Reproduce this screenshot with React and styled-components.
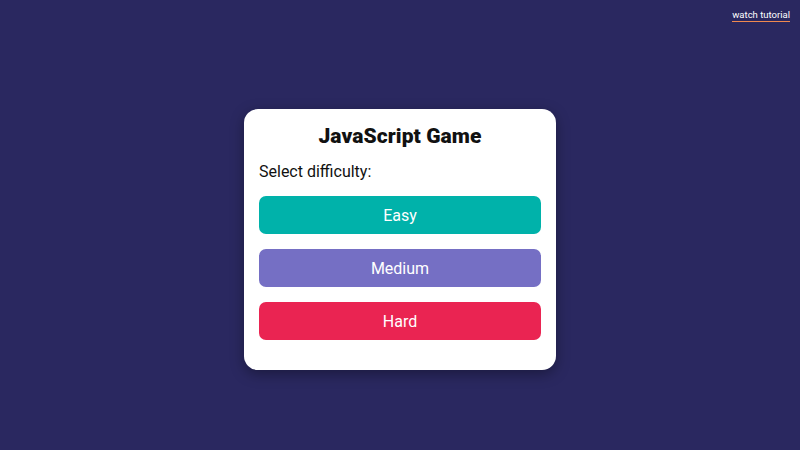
import React from 'react';
import styled, { createGlobalStyle } from 'styled-components';

const GlobalStyle = createGlobalStyle`
    * {
        box-sizing: border-box;
    }
    body {
        margin: 0;
        background: #2a2860;
        font-family: 'Roboto', 'Noto Sans', sans-serif;
    }
`;

const Page = styled.div`
    position: relative;
    min-height: 100vh;
    display: flex;
    align-items: center;
    justify-content: center;
    padding-top: 29px;
`;

const TutorialLink = styled.a`
    position: absolute;
    top: 9px;
    right: 10px;
    color: #ffffff;
    font-size: 9.5px;
    text-decoration: none;
    padding-bottom: 1px;
    border-bottom: 1.5px solid #f0894f;
`;

const Card = styled.div`
    width: 312px;
    background: #ffffff;
    border-radius: 14px;
    padding: 15px 15px 15px;
    box-shadow: 0 4px 14px rgba(0, 0, 0, 0.35);
`;

const Title = styled.h1`
    margin: 0;
    text-align: center;
    font-size: 21px;
    line-height: 24px;
    font-weight: 900;
    letter-spacing: 0.1px;
    color: #111111;
`;

const Label = styled.p`
    margin: 14px 0 14px;
    font-size: 16px;
    line-height: 20px;
    color: #111111;
`;

const Options = styled.div`
    display: flex;
    flex-direction: column;
    gap: 15px;
    padding-bottom: 15px;
`;

const DifficultyButton = styled.button`
    height: 38px;
    width: 100%;
    border: none;
    border-radius: 7px;
    background: ${(props) => props.color};
    color: #ffffff;
    font-family: inherit;
    font-size: 16px;
    cursor: pointer;
`;

const levels = [
    { name: 'Easy', color: '#00b2aa' },
    { name: 'Medium', color: '#756fc4' },
    { name: 'Hard', color: '#ea2452' },
];

const App = () => {
    return (
        <>
            <GlobalStyle />
            <Page>
                <TutorialLink href="#">watch tutorial</TutorialLink>
                <Card>
                    <Title>JavaScript Game</Title>
                    <Label>Select difficulty:</Label>
                    <Options>
                        {levels.map((level) => (
                            <DifficultyButton key={level.name} color={level.color}>
                                {level.name}
                            </DifficultyButton>
                        ))}
                    </Options>
                </Card>
            </Page>
        </>
    );
};

export default App;
